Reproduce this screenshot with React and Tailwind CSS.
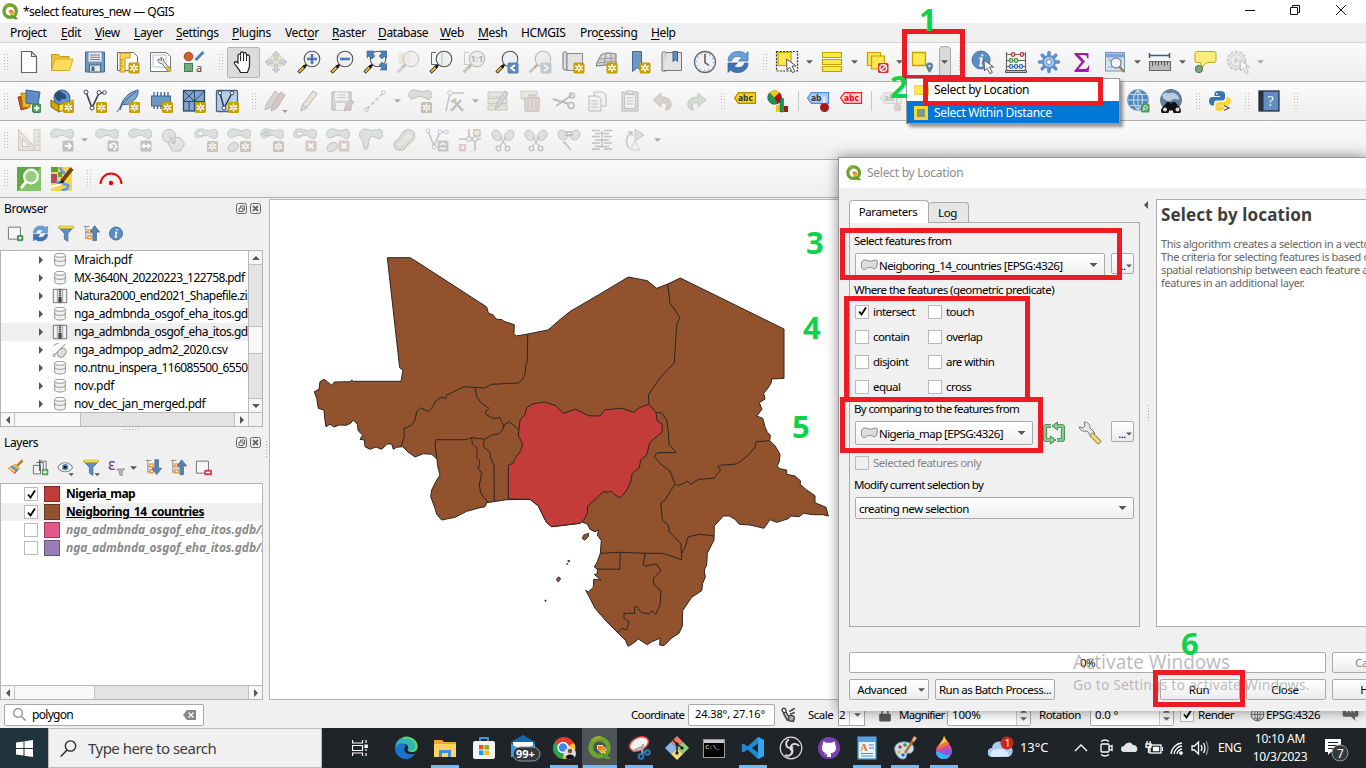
import React from "react";

/* ---------- small drawing helpers ---------- */
const Svg = ({ s = 24, children, className = "" }) => (
  <svg width={s} height={s} viewBox="0 0 24 24" fill="none" className={"shrink-0 " + className}>{children}</svg>
);
const Star = ({ x = 12.5, y = 12.5, fill = "#c4a000" }) => (
  <g transform={`translate(${x} ${y})`}>
    <rect x="0" y="0" width="11" height="11" rx="1.5" fill={fill} />
    <path d="M5.5 1.5v8M1.8 3.5l7.4 4M9.2 3.5l-7.4 4" stroke="#fff" strokeWidth="1.5" />
    <circle cx="5.5" cy="5.5" r="1.1" fill={fill} />
  </g>
);
const DimStar = (p) => <Star {...p} fill="#8d8560" />;
const Badge = ({ fill, d, x = 12.5, y = 12.5 }) => (
  <g transform={`translate(${x} ${y})`}>
    <rect width="11" height="11" rx="1.5" fill={fill} />
    <path d={d} stroke="#fff" strokeWidth="1.8" />
  </g>
);
const Down = ({ c = "#666", w = 7 }) => (
  <svg width={w} height="4" viewBox="0 0 8 4" className="shrink-0"><path d="M0 0h8L4 4z" fill={c} /></svg>
);
const Lens = ({ children, glass = "#eef0f0", handle = "#f0b92b" }) => (
  <Svg>
    <path d="M1.5 22.5L8 16" stroke="#222" strokeWidth="3.2" />
    <path d="M2 22L7 17" stroke={handle} strokeWidth="2" />
    <path d="M6.5 17.5l3-3" stroke="#111" strokeWidth="2.4" />
    <circle cx="15" cy="9" r="7.8" fill={glass} stroke="#555" strokeWidth="1.1" />
    {children}
  </Svg>
);
const DimLens = ({ children }) => (
  <Svg className="opacity-40">
    <path d="M1.5 22.5L8 16" stroke="#8d8873" strokeWidth="3" />
    <path d="M6.5 17.5l3-3" stroke="#555" strokeWidth="2.4" />
    <circle cx="15" cy="9" r="7.8" fill="#dfe1e1" stroke="#666" strokeWidth="1.1" />
    {children}
  </Svg>
);
const Blob = ({ extra, x = 0, y = 0 }) => (
  <g>
    <path transform={`translate(${x} ${y})`} d="M2 2.500C5-.5 10 1.500 13 2.500S19 0 22 2s2 8-1 8.500S15 6.500 11 7.500 4 11 2 9 .5 4.500 2 2.500z" fill="#b6beb9" stroke="#7b817d" strokeWidth="1" />
    {extra}
  </g>
);
const Scissors = () => (
  <g stroke="#777" strokeWidth="1.3"><path d="M9 9l6 9M15 9l-6 9" /><circle cx="7.500" cy="20.500" r="2.300" /><circle cx="16.500" cy="20.500" r="2.300" /></g>
);
const Tag = ({ fill, stroke, color, text }) => (
  <g>
    <path d="M1.500 9l4-5.300h17v10.600h-17z" fill={fill} stroke={stroke} strokeWidth="1.200" />
    <text x="5" y="12.200" fontSize="8.500" fontWeight="700" fill={color} fontFamily="Noto Sans, sans-serif">{text}</text>
  </g>
);
const Qgis = ({ s = 17 }) => (
  <Svg s={s}>
    <circle cx="11.500" cy="11.500" r="8.700" stroke="#6ba32f" strokeWidth="4.800" />
    <path d="M4 5a10 10 0 0 1 9-3.500" stroke="#93b023" strokeWidth="3" />
    <path d="M13 12.500l10 10.500h-5.500L11 16z" fill="#5c9630" />
    <path d="M9.500 9.500h5l3.500 4-4 3.500-4.500-4z" fill="#ee7913" stroke="#fff" strokeWidth=".8" />
    <path d="M13 13l4.500 4.500" stroke="#f5c32c" strokeWidth="1.800" />
  </Svg>
);
const Refresh = ({ s = 24 }) => (
  <Svg s={s}>
    <path d="M2 11C2 5 7 1 13 1.500c3 0 5 1 6.500 2.500L22 1.500V11h-9.500l3.300-3.200C12 5 6.500 6.500 5.500 11z" fill="#6b9fdb" stroke="#3a6ea8" strokeWidth=".7" />
    <path d="M22 13c0 6-5 10-11 9.500-3 0-5-1-6.500-2.500L2 22.500V13h9.500l-3.300 3.200c3.800 2.800 9.300 1.300 10.300-3.200z" fill="#3f73b3" stroke="#2d5c96" strokeWidth=".7" />
  </Svg>
);
const Info = ({ s = 24, children }) => (
  <Svg s={s}>
    <circle cx="10" cy="10" r="9" fill="#5b8cc4" stroke="#4675aa" />
    <path d="M8.500 8.500h2.200l-1.500 7h2.300M11.300 4.300v2" stroke="#fff" strokeWidth="1.900" />
    {children}
  </Svg>
);
const Arrow = ({ x = 13, y = 11 }) => (
  <path transform={`translate(${x} ${y})`} d="M0 0l9.500 7h-4l2.800 5.500-2.300 1.200-2.800-5.500L.500 11z" fill="#fff" stroke="#555" strokeWidth="1" />
);

/* ---------- toolbar icons ---------- */
const I = {
  newFile: <Svg><path d="M4.500 1.500h10l5 5v16h-15zM14.500 1.500v5h5" fill="#fff" stroke="#666" strokeWidth="1.200" /></Svg>,
  open: <Svg><path d="M1.500 20V4.500h7l1.500 2h9V9" fill="#e9c23a" stroke="#c39a17" /><path d="M1.500 20.500L5 9h18l-3.500 11.500z" fill="#ffdc5c" stroke="#d8ac22" /></Svg>,
  save: <Svg><path d="M2.500 2h19v20h-19z" fill="#6d97c4" stroke="#46688f" /><rect x="5.500" y="2.500" width="13" height="9" fill="#eee" /><path d="M7 5h10M7 7.300h10M7 9.500h10" stroke="#777" /><rect x="6.500" y="15" width="11" height="7" fill="#e8e8e8" stroke="#46688f" /><rect x="8.500" y="16.500" width="3" height="4.500" fill="#46688f" /></Svg>,
  layout: <Svg><path d="M1.500 2.500h16l4 4v14h-20z" fill="#fff" stroke="#666" /><path d="M4 3h10v5H9v14H4z" fill="#f5d35f" stroke="#c49b10" /><path d="M4 10h3M4 13h2M4 16h3M4 19h2" stroke="#a67f00" /><Star /></Svg>,
  layoutMgr: <Svg><path d="M1.500 2.500h16l4 4v15h-20z" fill="#fff" stroke="#777" /><path d="M4 5h13v12H4z" stroke="#a9c0e4" /><path d="M9 9a3.500 3.500 0 0 0 4 4.500l6 8 3-2.500-7-7c0-3-1-4.500-3.500-4.500l1.500 3z" fill="#e8e8e8" stroke="#777" /><path d="M17 16.500l5 5" stroke="#e2b83b" strokeWidth="3" /></Svg>,
  style: <Svg><circle cx="6.500" cy="6.500" r="4.300" fill="#d0602c" stroke="#a94413" /><path d="M13.500 10l8-8" stroke="#4f7fb5" strokeWidth="3" /><rect x="2.500" y="13.500" width="8" height="8" fill="#6fac80" stroke="#457e55" /><text x="14" y="21.500" fontSize="11" fill="#444" fontFamily="Noto Sans, sans-serif">a</text></Svg>,
  hand: <Svg><path d="M7 13V5.500c0-2 2.500-2 2.500 0V3.500c0-2.300 3-2.300 3 0V4c0-2 3-2 3 .5V6c.5-1.700 3-1.500 3 .7V15c0 4-1.500 5-2 7.500H9.500C8.500 19 5 16.500 3.500 13.500c-.7-2 1.500-2.500 2.500-1.300z" fill="#fff" stroke="#222" strokeWidth="1.200" /><path d="M9.500 5.500V11M12.500 4v7M15.500 5v6" stroke="#222" /></Svg>,
  pan: <Svg className="opacity-50"><rect x="7" y="6" width="10" height="10" fill="#e3dca4" stroke="#b8ac67" /><path d="M12 1l4 4h-2.500v5h-3V5H8zM12 23l4-4h-2.500v-5h-3v5H8zM1 12l4-4v2.500h4v3H5V16zM23 12l-4-4v2.500h-4v3h4V16z" fill="#a3b0bf" stroke="#8794a5" strokeWidth=".8" /></Svg>,
  zoomIn: <Lens><path d="M15 4v10M10 9h10" stroke="#4a7db8" strokeWidth="2.600" /></Lens>,
  zoomOut: <Lens><path d="M10 9h10" stroke="#4a7db8" strokeWidth="2.600" /></Lens>,
  zoomFull: <Lens><path d="M4 1h7L9 3l3 3-3 3-3-3-2 2zM24 1v7l-2-2-3 3-3-3 3-3-2-2zM24 20h-7l2-2-3-3 3-3 3 3 2-2z" fill="#4d7fb8" stroke="#33608f" strokeWidth=".6" /></Lens>,
  zoomSel: <Svg className="opacity-40"><path d="M3 2.500h11v12H3z" fill="#d9d4ab" /><path d="M1.500 22.500L8 16" stroke="#aaa68d" strokeWidth="3" /><path d="M6.500 17.500l3-3" stroke="#666" strokeWidth="2.400" /><circle cx="15" cy="9" r="7.800" fill="#dfe1e1" fillOpacity=".7" stroke="#777" /></Svg>,
  zoomLayer: <Lens handle="#e9b935"><path d="M7 2.500H2.500v12H9" stroke="#666" /><path d="M13 3v12" stroke="#bbb" /></Lens>,
  zoomNative: <DimLens><path d="M7 2.500H2.500v12H9" stroke="#888" /><text x="8.500" y="12.300" fontSize="9" fontWeight="700" fill="#444" fontFamily="Noto Sans, sans-serif">1:1</text></DimLens>,
  zoomLast: <Lens><Badge fill="#5b86b5" d="M7.500 2.500l-4 3 4 3" /></Lens>,
  zoomNext: <DimLens><Badge fill="#7b8a9a" d="M3.500 2.500l4 3-4 3" /></DimLens>,
  newMap: <Svg><path d="M2 3.500C2 1 6 1 6 3.500V20H4c-2 0-2-2-2-3z" fill="#ddd" stroke="#777" /><path d="M6 3.500h15.500v17H6z" fill="#e3e3e3" stroke="#888" /><Star /></Svg>,
  new3d: <Svg><path d="M7 5c5-3 10-2 15-1v10L2 16c1-4 3-7 5-11z" fill="#d6d6d6" stroke="#777" /><path d="M5 9l17-1M3.500 13l18-2M12 3l-2 13M17 3v12" stroke="#999" /><Star /></Svg>,
  newBm: <Svg><path d="M5.500 1.500h9v20l-4-4-5 4z" fill="#6d97c4" stroke="#46688f" /><Star /></Svg>,
  showBm: <Svg><path d="M2 3.500C2 1 6 1 6 3.500V21H2z" fill="#ddd" stroke="#777" /><path d="M6 2.500h15.500v18H4" fill="#e3e3e3" stroke="#777" /><path d="M13 1.500h4.500v10l-2.200-2-2.300 2z" fill="#5f8dc0" stroke="#3c5f88" /></Svg>,
  clock: <Svg><circle cx="12" cy="12" r="10.500" fill="#f1f1f1" stroke="#6c6c6c" strokeWidth="1.300" /><circle cx="12" cy="12" r="8.500" stroke="#7aa3d4" strokeDasharray="1 3.450" strokeWidth="1.400" /><path d="M12 4v8.500l4 3" stroke="#555" strokeWidth="1.500" /></Svg>,
  refresh: <Refresh />,
  select: <Svg><path d="M1.500 1.500h21v19.500h-21z" stroke="#333" strokeDasharray="2 1.300" strokeWidth="1.200" /><path d="M3 2.500h13v13H3z" fill="#fbe74e" stroke="#c4a000" strokeWidth="1.200" /><Arrow x={11.500} y={9} /></Svg>,
  selForm: <Svg><path d="M2.500 2.500h19v5h-19zM2.500 9.500h19v5h-19zM2.500 16.500h19v5h-19z" fill="#fbe74e" stroke="#c4a000" strokeWidth="1.200" /></Svg>,
  desel: <Svg><path d="M2.500 2.500h13v13h-13z" fill="#fbe74e" stroke="#c4a000" strokeWidth="1.200" /><path d="M6.500 6h13v13h-13z" fill="#fbe74e" stroke="#c4a000" strokeWidth="1.200" /><rect x="13" y="13" width="10.500" height="10" rx="1.500" fill="#d8333b" /><circle cx="18.200" cy="18" r="3.300" stroke="#fff" strokeWidth="1.300" /><path d="M16 20.300l4.500-4.500" stroke="#fff" strokeWidth="1.300" /></Svg>,
  selLoc: <Svg><path d="M2.500 2.500h13v13h-13z" fill="#fbe74e" stroke="#c4a000" strokeWidth="1.300" /><path d="M19.500 12.500a3.500 3.500 0 0 1 3.500 3.500c0 2.500-3.500 7-3.500 7S16 18.500 16 16a3.500 3.500 0 0 1 3.500-3.500z" fill="#5b7f9f" /><circle cx="19.500" cy="16" r="1.200" fill="#dfe8ef" /></Svg>,
  info: <Info><Arrow x={13} y={10} /></Info>,
  abacus: <Svg><path d="M2.500 2v20M21.500 2v20M2 4.500h20M2 10.500h20M2 16.500h20" stroke="#666" strokeWidth="1.200" /><path d="M1.500 20.500h21v2h-21z" fill="#bbb" stroke="#555" /><g strokeWidth="1.200"><circle cx="9" cy="4.500" r="1.800" fill="#f6d0d0" stroke="#c3322f" /><circle cx="18" cy="4.500" r="1.800" fill="#f6d0d0" stroke="#c3322f" /><circle cx="7" cy="10.500" r="1.800" fill="#c9e8c9" stroke="#3b923b" /><circle cx="12" cy="10.500" r="1.800" fill="#c9e8c9" stroke="#3b923b" /><circle cx="7" cy="16.500" r="1.800" fill="#cfe0f3" stroke="#3c6ea8" /><circle cx="12" cy="16.500" r="1.800" fill="#cfe0f3" stroke="#3c6ea8" /><circle cx="17" cy="16.500" r="1.800" fill="#cfe0f3" stroke="#3c6ea8" /></g></Svg>,
  gear: <Svg><path d="M12 2.500v19M2.500 12h19M5.200 5.200l13.600 13.600M18.800 5.200L5.200 18.800" stroke="#5d8fc9" strokeWidth="3.600" strokeLinecap="round" /><circle cx="12" cy="12" r="6" fill="#a9c8e8" stroke="#5d8fc9" strokeWidth="1.800" /><circle cx="12" cy="12" r="2.500" fill="#fff" stroke="#5d8fc9" /></Svg>,
  sigma: <Svg><path d="M4.500 3h14v5.500h-1.200C17 6 16 5 13.500 5H9l6 6.500L8.500 19H14c3 0 4-1.300 4.500-3.500h1L18.500 22H4.500v-1.500L11.500 12l-7-7.500z" fill="#a01ca6" /></Svg>,
  table: <Svg><rect x="2.500" y="2.500" width="19" height="18.500" fill="#d5e3f3" stroke="#7494b9" /><path d="M2.500 3.500h19v4h-19z" fill="#7ea5d1" /><path d="M5 10h14M5 17h14" stroke="#7ea5d1" /><circle cx="13" cy="13" r="5" fill="#eef4f8" stroke="#666" /><path d="M16.500 17l5 5" stroke="#a0803c" strokeWidth="2.200" /></Svg>,
  measure: <Svg><path d="M1.500 5.500h20M1.500 3v5M21.500 3v5" stroke="#3d5a7a" strokeWidth="1.500" /><rect x="1.500" y="11.500" width="21" height="9" fill="#bcbcbc" stroke="#666" /><path d="M4.500 12v4M7.500 12v3M10.500 12v4M13.500 12v3M16.500 12v4M19.500 12v3" stroke="#555" /></Svg>,
  tips: <Svg><path d="M4 1.500h17q2 0 2 2v7q0 2-2 2h-6q-5 1-6 6.500l-1.500-6.500H4q-2 0-2-2v-7q0-2 2-2z" fill="#fdec7c" stroke="#c2a31d" /><circle cx="6" cy="19" r="3.700" fill="#78a77c" stroke="#4b7b51" /></Svg>,
  action: <Svg className="opacity-35"><circle cx="10.500" cy="10.500" r="9" fill="#ccc" stroke="#888" strokeWidth="2" strokeDasharray="3 1.500" /><circle cx="10.500" cy="10.500" r="6" fill="#ddd" stroke="#888" /><path d="M8.500 7.500l5 3-5 3z" fill="#888" /><Arrow x={14} y={10} /></Svg>,

  dsm: <Svg><path d="M1 8l6-1 4 12-7 2z" fill="#c9581c" stroke="#984014" /><path d="M4 4l9 1v13l-7 1z" fill="#e6b51e" stroke="#a77e07" /><path d="M9 1l14 2-2 13-12-2z" fill="#5f8dc4" stroke="#3a6292" /><g transform="translate(15 14.500)"><rect x=".5" y=".5" width="8.500" height="8.500" rx="1.500" fill="#4b9b5b" stroke="#3d7f4a" /><path d="M4.750 2v5.500M2 4.750h5.500" stroke="#fff" strokeWidth="1.800" /></g></Svg>,
  gpkg: <Svg><circle cx="12" cy="9" r="8" fill="#5f94cf" stroke="#355f90" /><path d="M7 3c3-2 5 0 6 1s4 2 3 5-4-1-5 2-5 0-6-3 0-4 2-5z" fill="#2b4d78" /><path d="M1 11l8 5v7l-8-5z" fill="#d6a900" stroke="#7e6500" /><path d="M9 16l14-5v7L9 23z" fill="#fbe74e" stroke="#9c8200" /><Star x={13} y={13} /></Svg>,
  shp: <Svg><path d="M3 3l6 16L16 4h6" stroke="#445" strokeWidth="1.700" /><g fill="#fff" stroke="#445"><circle cx="3" cy="3" r="2" /><circle cx="9" cy="19" r="2" /><circle cx="16" cy="3.500" r="2" /><circle cx="21.500" cy="3.500" r="1.800" /></g><Star x={13} y={13} /></Svg>,
  feather: <Svg><path d="M4 21C5 11 12 3 22 1c1 5-3 11-9 14l-7 1z" fill="#7da5d0" stroke="#42668f" /><path d="M1 23C5 16 11 9 20 3" stroke="#42668f" /><Star x={13} y={13} /></Svg>,
  chip: <Svg><path d="M5 3v17M8.500 3v17M12 3v17M15.500 3v17M19 3v17" stroke="#41648c" strokeWidth="1.300" /><rect x="2.500" y="7" width="19" height="10" fill="#6d97c4" stroke="#41648c" /><Star x={13} y={13} /></Svg>,
  mesh: <Svg><rect x="1.500" y="1.500" width="21" height="20.500" fill="#7ea5d1" stroke="#2d4765" strokeWidth="1.300" /><path d="M12.500 1v21M1 12.500h22M12.500 1.500L1.500 12.500M1.500 1.500l11 11M22.500 2l-10 10M7 12v10" stroke="#2d4765" /><Star x={13} y={13} /></Svg>,
  vlayer: <Svg><rect x="1.500" y="1.500" width="21" height="21" rx="1" fill="#b5cfea" stroke="#41648c" strokeWidth="1.300" /><path d="M5 4l4 15 8-15" stroke="#334" strokeWidth="1.500" /><g fill="#fff" stroke="#445"><circle cx="5" cy="4" r="1.800" /><circle cx="9" cy="19" r="2" /><circle cx="17" cy="4" r="1.800" /></g><Star x={13} y={13} /></Svg>,
  pencils: <Svg className="opacity-40"><path d="M1 21l2-7L11 2l4 3L7 18z" fill="#aa9" stroke="#666" /><path d="M7 22l2-7 8-12 4 3-8 13z" fill="#b9837e" stroke="#666" /><path d="M18 21h6l-3 3z" fill="#222" /></Svg>,
  pencil: <Svg className="opacity-40"><path d="M4 22l1.500-6L16 2l4 3L9.500 19z" fill="#d4d1bd" stroke="#555" /><path d="M6 16l3.500 2.500" stroke="#555" /></Svg>,
  saveEdit: <Svg className="opacity-40"><path d="M2 3h19v18H2z" fill="#aaa" stroke="#555" /><rect x="5" y="3.500" width="13" height="8" fill="#eee" /><path d="M7 6h9M7 8.500h9" stroke="#888" /><rect x="6" y="14" width="9" height="7" fill="#eee" /><path d="M14 22l1-4 6-7 3 2-6 8z" fill="#b9837e" stroke="#777" /></Svg>,
  digitize: <Svg className="opacity-35"><path d="M4 20L20 4" stroke="#777" strokeWidth="1.600" strokeDasharray="4 2" /><circle cx="3.500" cy="20.500" r="2" stroke="#777" /><circle cx="20.500" cy="3.500" r="2" stroke="#777" /></Svg>,
  addPoly: <Svg className="opacity-45"><Blob /><DimStar x={13} y={13} /></Svg>,
  vertex: <Svg className="opacity-40"><path d="M5 22L9 4h14" stroke="#777" strokeWidth="1.300" /><circle cx="9" cy="4" r="2.300" fill="#fff" stroke="#777" /><path d="M10 22L20 11M13 12l9 10M10 13l5-3" stroke="#776" strokeWidth="2.600" /></Svg>,
  modAttr: <Svg className="opacity-40"><path d="M2 3h19v5H2zM2 9.500h19v5H2zM2 16h19v5H2z" fill="#cfceb4" stroke="#888" /><path d="M9 20l2-6 8-12 3 2-8 13z" fill="#aaa" stroke="#666" /></Svg>,
  trash: <Svg className="opacity-35"><path d="M2 2h16v8H2z" fill="#cfcfa8" stroke="#888" /><path d="M4 9h17M5.500 9l1 13h13l1-13M9 11v9M13 11v9M17 11v9M10 8V6h6v2" fill="#c6a5a5" stroke="#866" strokeWidth="1.300" /></Svg>,
  cut: <Svg className="opacity-35"><path d="M1 10l16 5M4 17L20 6" stroke="#555" strokeWidth="2" /><circle cx="20" cy="6.500" r="2.500" stroke="#555" strokeWidth="1.500" /><circle cx="19" cy="16.500" r="3" stroke="#555" strokeWidth="1.500" /></Svg>,
  copy: <Svg className="opacity-40"><path d="M9 3h9l3 3v11H9z" fill="#eee" stroke="#666" /><path d="M4 7h9l3 3v12H4z" fill="#eee" stroke="#666" /><path d="M6 12h7M6 15h7M6 18h7" stroke="#777" /></Svg>,
  paste: <Svg className="opacity-40"><path d="M4 3h16v19H4z" fill="#bbb" stroke="#666" /><path d="M6.500 5.500h11v14h-11z" fill="#eee" stroke="#777" /><path d="M9 2h6v3H9z" fill="#ddd" stroke="#666" /><path d="M8.500 9h7M8.500 12h7M8.500 15h7" stroke="#777" /></Svg>,
  undo: <Svg className="opacity-40"><path d="M2 11l8-7v4c8 0 11 4 10 9-1 3-3 4-6 4 4-4 1-8-4-7v4z" fill="#b39d91" stroke="#8a7a70" /></Svg>,
  redo: <Svg className="opacity-40"><path d="M22 11l-8-7v4C6 8 3 12 4 17c1 3 3 4 6 4-4-4-1-8 4-7v4z" fill="#a9b1a9" stroke="#7c857c" /></Svg>,
  label: <Svg><Tag fill="#f5d020" stroke="#a88c00" color="#333" text="abc" /></Svg>,
  diagram: <Svg><circle cx="8.500" cy="8.500" r="6.800" fill="#1a9850" stroke="#333" strokeWidth=".6" /><path d="M8.500 8.500L3.500 3.500a7 7 0 0 1 10 0z" fill="#f9c80e" /><path d="M8.500 8.500l5-5a7 7 0 0 1-2 11.300z" fill="#b50f0f" /><path d="M10 16h3.500v7H10z" fill="#f9c80e" /><path d="M14 9.500h3.500V23H14z" fill="#1a9850" stroke="#115" strokeWidth=".4" /><path d="M18 17h4v6h-4z" fill="#b50f0f" /></Svg>,
  pinLab: <Svg><Tag fill="#a9cdf6" stroke="#4a8be0" color="#333" text="ab" /><path d="M18 7.500l.5 8" stroke="#e4e4e4" strokeWidth="3" /><circle cx="18.500" cy="18.500" r="4.500" fill="#a3191c" /></Svg>,
  redLab: <Svg><Tag fill="#ffd3d3" stroke="#f02020" color="#e00" text="abc" /></Svg>,
  fadeLab: <Svg className="opacity-40"><Tag fill="#ddd" stroke="#aaa" color="#666" text="ab" /><circle cx="18.500" cy="18.500" r="4" fill="#b99" /><path d="M18 7v9" stroke="#999" strokeWidth="2" /></Svg>,
  globe: <Svg><circle cx="12" cy="11" r="10.500" fill="#4f86c0" stroke="#8fa4bb" /><path d="M2 11h20M4 5.500h16M4 16.500h16M12 1v20M12 1c-6 6-6 14 0 20M12 1c6 6 6 14 0 20" stroke="#c6daee" strokeWidth="1.100" /><rect x="15" y="15" width="8.500" height="8.500" rx="1" fill="#4b9b5b" /><circle cx="19.500" cy="18.500" r="1.800" stroke="#fff" /><path d="M18 20l-1.500 1.800" stroke="#fff" /></Svg>,
  globe2: <Svg><circle cx="12" cy="11" r="10.500" fill="#5d7f9f" stroke="#5c7894" /><path d="M3 6c4-4 7-1 9-2s7 1 8 5-4-1-7 2-9 0-10-5z" fill="#b9cbdc" /><path d="M8 13h3l1 2 1-2h3l5 6a4 4 0 1 1-7 2h-4a4 4 0 1 1-7-2z" fill="#111" /><circle cx="6" cy="20.500" r="2" fill="#ddd" /><circle cx="18.500" cy="20.500" r="2" fill="#ddd" /></Svg>,
  python: <Svg><path d="M11 2c-5 0-4.500 2-4.500 5H12v1H4c-4 0-4 8 0 8.500h2c0-5 1-5 4-5h4c2 0 3-1 3-3V5c0-2-2-3-6-3z" fill="#3776ab" /><circle cx="8.800" cy="4.800" r=".9" fill="#fff" /><path d="M12 22c-5 0-4.500-1.500-4.500-5 0-3 1-4 4-4h3c3 0 4-1 4-5h1.500c4 0 3.500 8 0 8.500H12v1h4c1 2-1 4.500-4 4.500z" fill="#ffd43b" /><path d="M16 16.500l5 2.500-5 2.500" stroke="#555" strokeWidth="1.300" /></Svg>,
  help: <Svg><rect x="2" y="2" width="20" height="20" fill="#5f8dc4" stroke="#223" strokeWidth="1.200" /><path d="M2 2h4.500v20H2z" fill="#233140" /><text x="10.500" y="17" fontSize="14" fill="#fff" fontFamily="Liberation Serif, serif">?</text></Svg>,

  cad: <Svg className="opacity-35"><path d="M1.500 1v21.500h19zM5.500 11v7.500H13z" fill="#cdbfb3" fillRule="evenodd" stroke="#887c70" /><path d="M17 1.500h6v21h-6z" fill="#d6cdb8" stroke="#887" /><path d="M20 5h3M19 9h4M20 13h3M19 17h4" stroke="#887" /></Svg>,
  move: <Svg className="opacity-40"><Blob extra={<Badge fill="#777" d="M2 5.500h6M5.500 2.500l3 3-3 3" />} /></Svg>,
  rotate: <Svg className="opacity-40"><Blob extra={<Badge fill="#777" d="M3 7a3 3 0 1 1 3 2M2 4l1 3 3-1" />} /></Svg>,
  scale: <Svg className="opacity-40"><Blob extra={<Badge fill="#777" d="M2 5.500h7M4 3L1.800 5.500 4 8M7 3l2.200 2.500L7 8" />} /></Svg>,
  simplify: <Svg className="opacity-40"><circle cx="8" cy="8" r="6.800" fill="#bcc4bf" stroke="#777" /><path d="M11.500 9.500h8l4 6.500-4 7h-8L7.500 16z" fill="#c9cfcb" stroke="#777" /><path d="M8 8l6 7M10.500 15H14v-4" stroke="#666" /></Svg>,
  addRing: <Svg className="opacity-40"><Blob extra={<><ellipse cx="6.500" cy="5.500" rx="3.200" ry="2" fill="#fff" stroke="#777" /><DimStar x={13} y={13} /></>} /></Svg>,
  addPart: <Svg className="opacity-40"><Blob extra={<><path d="M1 21c0-5 6-8 9-6s1 7-3 8-6 0-6-2z" fill="#bcc3be" stroke="#777" /><DimStar x={13} y={13} /></>} /></Svg>,
  fillRing: <Svg className="opacity-40"><Blob extra={<><ellipse cx="6.500" cy="5.500" rx="3.200" ry="2" fill="#aaa" stroke="#777" /><DimStar x={13} y={13} /></>} /></Svg>,
  delRing: <Svg className="opacity-40"><Blob extra={<><ellipse cx="6.500" cy="5.500" rx="3.200" ry="2" fill="#fff" stroke="#777" /><Badge fill="#b08a90" d="M3 3l5 5M8 3l-5 5" /></>} /></Svg>,
  delPart: <Svg className="opacity-40"><Blob extra={<><path d="M1 21c0-5 6-8 9-6s1 7-3 8-6 0-6-2z" fill="#bcc3be" stroke="#777" /><Badge fill="#b08a90" d="M3 3l5 5M8 3l-5 5" /></>} /></Svg>,
  reshape: <Svg className="opacity-40"><path d="M2 3C5-.5 10 2 13 2.500S19 0 22 2s2 8-1 8.500S14 7 11 9c-2 3-1 12-4 12.500S5 14 2 10.500 .5 5 2 3z" fill="#b6beb9" stroke="#777" /></Svg>,
  offset: <Svg className="opacity-40"><path d="M2 17c0-5 4-4 6-8s5-8 10-7 6 6 3 10-5 3-7 7-11 5-12-2z" fill="#c6cbb5" stroke="#777" strokeWidth="1.200" /><path d="M5 17c0-3 4-3 6-7s4-6 7-5 3 4 1 6-5 3-7 6-7 4-7 0z" fill="#cfd3cb" stroke="#999" /></Svg>,
  rotPt: <Svg className="opacity-35"><path d="M3 3l6 15L15 4h7" stroke="#667" strokeWidth="1.500" /><g fill="#fff" stroke="#667"><circle cx="3" cy="3" r="2" /><circle cx="9" cy="19" r="2" /><circle cx="15" cy="4" r="2" /><circle cx="21.500" cy="4" r="1.800" /></g><Badge fill="#777" d="M3 4.500a3 3 0 0 1 5 0M8 7a3 3 0 0 1-5 0" /></Svg>,
  trim: <Svg className="opacity-40"><path d="M1 11h22M11 1v10M17 11v12" stroke="#777" strokeWidth="1.600" /><path d="M9 9h4v4H9zM15 9h4v4h-4z" fill="#fff" stroke="#777" /><g transform="translate(15 1) scale(.7)"><DimStar x={0} y={0} /></g><g transform="translate(1 16) scale(.65)"><Badge fill="#b08a90" x={0} y={0} d="M3 3l5 5M8 3l-5 5" /></g></Svg>,
  split: <Svg className="opacity-40"><path d="M11 10C10 1 1 0 1 6s7 9 10 4zM13 10c1-9 10-10 10-4s-7 9-10 4z" fill="#bcc4bf" stroke="#777" /><Scissors /></Svg>,
  merge: <Svg className="opacity-40"><path d="M11 9C10 1 1 0 1 6s7 8 10 3zM13 9c1-8 10-9 10-3s-7 8-10 3z" fill="#bcc4bf" stroke="#777" /><path d="M8 4h8M8 7h8M6 14c4 1 5 6 8 8" stroke="#666" strokeWidth="1.400" /></Svg>,
  attrs: <Svg className="opacity-40"><path d="M2 2.500h8M14 2.500h8M2 8.500h8M14 8.500h8M2 15h8M14 15h8M2 21h8M14 21h8M5 5.500h14M5 12h14M5 18.500h14M12 3v17" stroke="#777" strokeWidth="1.300" /></Svg>,
  symRot: <Svg className="opacity-35"><path d="M6 20A10 10 0 0 1 8 5M5 4h4v4" stroke="#667" strokeWidth="1.500" /><path d="M12 1l9 6-9 6z" fill="#a9b5ad" stroke="#778" /><path d="M12 13l5 9H7z" fill="#eee" stroke="#999" /></Svg>,

  osmFind: <Svg><rect width="24" height="24" fill="#5fa845" /><path d="M0 24L24 0v24z" fill="#84c565" /><circle cx="14" cy="9.500" r="6.800" stroke="#fff" strokeWidth="2.200" fill="#97cf80" /><path d="M9 15l-5 6" stroke="#fff" strokeWidth="3" /></Svg>,
  osmEdit: <Svg><rect x="1" y="0" width="21" height="24" fill="#f9d649" /><path d="M1 0h7v5H1z" fill="#58a046" /><path d="M1 7h6v9H1z" fill="#b04a5e" /><path d="M8 5h4v5H8z" fill="#58a046" /><path d="M9 0c4 3 2 6 6 6M6 15c3 2 5-2 7 1s6 0 5 4-4 1-6 4" stroke="#5a9cf0" strokeWidth="2.800" /><path d="M1 20l10-3" stroke="#fff" strokeWidth="2" /><path d="M12 14L22 1.500" stroke="#7c3f10" strokeWidth="4" /><path d="M8 17l4-4 2.500 2z" fill="#111" /></Svg>,
  arc: <Svg><path d="M1.500 17a10.500 10.500 0 0 1 21 0" stroke="#f40000" strokeWidth="1.900" /><circle cx="12" cy="16" r="2.200" fill="#f40000" /></Svg>,
};

/* ---------- toolbar layout ---------- */
const Handle = ({ first }) => (
  <div className={"flex shrink-0 justify-center gap-[2px] " + (first ? "w-[12.5px]" : "w-4 pl-[5px]")}>
    <div className="h-[17px] w-px bg-[repeating-linear-gradient(#bbb_0_1px,transparent_1px_3px)]" />
    <div className="h-[17px] w-px bg-[repeating-linear-gradient(#bbb_0_1px,transparent_1px_3px)]" />
  </div>
);
const Bar = ({ items, h = "h-[39px]" }) => (
  <div className={"flex shrink-0 items-center border-b border-[#b0b0b0] bg-gradient-to-b from-[#fafafa] to-[#eeeeee] overflow-hidden " + h}>
    <Handle first />
    {items.map((it, i) => {
      if (it === "|") return <Handle key={i} />;
      if (it === "/") return <div key={i} className="flex w-[7px] shrink-0 justify-center"><div className="h-5 w-px bg-[#c8c8c8]" /></div>;
      if (it === "v" || it === "w") return <div key={i} className="flex w-3 shrink-0 items-center justify-center"><Down c={it === "v" ? "#5c5c5c" : "#aaa"} /></div>;
      if (it === "gap") return <div key={i} className="w-[214px] shrink-0" />;
      if (it === "V") return <div key={i} className="flex h-8 w-3 shrink-0 items-center justify-center rounded-t border border-[#aaa] bg-[#dadada]"><Down c="#555" /></div>;
      return (
        <div key={i} className={"flex shrink-0 items-center justify-center w-[33px] " + (it === "hand" ? "h-[31px] rounded-[2px] border border-[#b4b4b4] bg-[#dcdcdc]" : "")}>
          {I[it]}
        </div>
      );
    })}
  </div>
);
const ROW1 = "newFile open save layout layoutMgr style | hand pan zoomIn zoomOut zoomFull zoomSel zoomLayer zoomNative zoomLast zoomNext newMap new3d newBm showBm clock refresh | select v selForm v desel v selLoc V | info abacus gear sigma table v measure v tips action w".split(" ");
const ROW2 = "dsm gpkg shp feather chip mesh vlayer | pencils pencil saveEdit digitize w addPoly vertex w modAttr trash cut copy paste undo redo | label diagram / pinLab redLab / fadeLab gap globe globe2 | python | help |".split(" ");
const ROW3 = "cad move w rotate scale simplify addRing addPart fillRing delRing delPart reshape offset rotPt trim split split merge attrs symRot w".split(" ");
const ROW4 = "osmFind osmEdit | arc".split(" ");

const MENU = [
  ["w-[51px]", "Pro", "j", "ect"], ["w-[34px]", "", "E", "dit"], ["w-[39px]", "", "V", "iew"], ["w-[42px]", "", "L", "ayer"],
  ["w-[56px]", "", "S", "ettings"], ["w-[53px]", "", "P", "lugins"], ["w-[47px]", "Vect", "o", "r"], ["w-[46px]", "", "R", "aster"],
  ["w-[62px]", "", "D", "atabase"], ["w-[38px]", "", "W", "eb"], ["w-[43px]", "", "M", "esh"], ["w-[59px]", "HCMGIS", "", ""],
  ["w-[71px]", "Pro", "c", "essing"], ["w-[40px]", "", "H", "elp"],
];

/* ---------- panels ---------- */
const PanelHead = ({ title }) => (
  <div className="flex h-[22px] shrink-0 items-center pl-1 pr-[1px] text-[12px] tracking-[-0.4px]">
    <span className="flex-1">{title}</span>
    <svg width="26" height="12" viewBox="0 0 26 12" fill="none" stroke="#666">
      <rect x=".5" y=".5" width="10" height="10" rx="2" /><path d="M4.500 4.500V3h4v4H7M3 5h4v3.500H3z" />
      <rect x="14.500" y=".5" width="10" height="10" rx="2" /><path d="M17 3l5 5M22 3l-5 5" strokeWidth="1.800" />
    </svg>
  </div>
);
const TreeUp = ({ down }) => (
  <Svg s={17}><path d="M1 2h8M4 2v18M4 10h3M4 18h3" stroke="#888" strokeWidth="1.300" /><rect x="7" y="7" width="4.500" height="4.500" fill="#fff" stroke="#f28a1a" strokeWidth="1.700" /><rect x="7" y="15" width="4.500" height="4.500" fill="#fff" stroke="#f28a1a" strokeWidth="1.700" />
    <path d={down ? "M14 1h5v12h4.500L16.500 22 10 13h4z" : "M14 22h5V10h4.500L16.500 1 10 10h4z"} fill="#5684b8" stroke="#3a5f8a" /></Svg>
);
const Funnel = ({ tri }) => (
  <Svg s={17}><path d="M1 3h21l-8 9v11l-5-3v-8z" fill="#5d8dc2" stroke="#41648c" /><path d="M1 1.500h21v3.500H1z" fill="#f6e04b" stroke="#b59c16" strokeWidth=".7" />{tri && <path d="M16 20h8l-4 4z" fill="#555" />}</Svg>
);
const AddLayer = ({ minus }) => (
  <Svg s={17}><path d="M2 3h17v17H2z" fill="#f6f6f6" stroke="#777" strokeWidth="1.400" />{minus ? <><rect x="13" y="15" width="11" height="8" rx="2" fill="#e63b45" /><path d="M15.500 19h6" stroke="#fff" strokeWidth="2" /></> : <><rect x="14" y="14" width="9" height="9" rx="2" fill="#4b9b5b" /><rect x="17" y="17" width="3" height="3" fill="#fff" /></>}</Svg>
);
const Db = () => (
  <Svg s={16}><path d="M4 5v13c0 4 16 4 16 0V5" fill="#f2f2f2" stroke="#888" strokeWidth="1.300" /><ellipse cx="12" cy="5" rx="8" ry="3" fill="#fff" stroke="#888" strokeWidth="1.300" /><path d="M4 11c0 4 16 4 16 0" stroke="#888" strokeWidth="1.300" /></Svg>
);
const Zip = () => (
  <Svg s={16}><path d="M2 2h20v20H2z" fill="#f4f4f4" stroke="#777" strokeWidth="1.500" /><path d="M8 2h8v20H8z" fill="#fff" stroke="#777" /><path d="M12 2v13" stroke="#333" strokeWidth="4" strokeDasharray="1.800 1.200" /><rect x="9.500" y="14" width="5" height="8" fill="#444" /></Svg>
);
const Csv = () => (
  <Svg s={16}><path d="M3 20L20 3M3 6c2-4 5-3 7-4" stroke="#777" strokeWidth="1.300" /><circle cx="3" cy="20" r="2" stroke="#777" /><path d="M9 21c-3-5 0-9 5-11s8 1 7 6-8 10-12 5z" fill="#ddd" stroke="#777" strokeWidth="1.300" /></Svg>
);
const Tri = ({ dir = "r", c = "#555" }) => (
  <svg width="8" height="8" viewBox="0 0 8 8" className="shrink-0"><path d={{ r: "M2 0l4 4-4 4z", l: "M6 0L2 4l4 4z", u: "M0 6l4-4 4 4z", d: "M0 2l4 4 4-4z" }[dir]} fill={c} /></svg>
);
const TREE = [
  [Db, "Mraich.pdf", "tracking-[-0.3px]"], [Db, "MX-3640N_20220223_122758.pdf", "tracking-[-0.6px]"], [Zip, "Natura2000_end2021_Shapefile.zip", "tracking-[-0.55px]"],
  [Db, "nga_admbnda_osgof_eha_itos.gdb", "tracking-[-0.5px]"], [Zip, "nga_admbnda_osgof_eha_itos.gdb.zip", "tracking-[-0.5px]"], [Csv, "nga_admpop_adm2_2020.csv", "tracking-[-0.5px]"],
  [Db, "no.ntnu_inspera_116085500_65501", "tracking-[-0.6px]"], [Db, "nov.pdf", "tracking-[-0.3px]"], [Db, "nov_dec_jan_merged.pdf", "tracking-[-0.4px]"],
];
const HScroll = ({ thumb, corner }) => (
  <div className="flex h-[14px] shrink-0 border-t border-[#b8b8b8] bg-[#e3e3e3]">
    <div className="flex w-[14px] items-center justify-center border-r border-[#c0c0c0] bg-[#f6f6f6]"><Tri dir="l" /></div>
    <div className={"border-r border-[#c0c0c0] bg-[#f8f8f8] " + thumb} />
    <div className="flex-1" />
    <div className="flex w-[14px] items-center justify-center border-l border-[#c0c0c0] bg-[#f6f6f6]"><Tri /></div>
    {corner && <div className="w-[14px] border-l border-[#c0c0c0] bg-[#f0f0f0]" />}
  </div>
);
const Check = ({ on, dim }) => (
  <div className={"flex h-[14px] w-[14px] shrink-0 items-center justify-center border border-[#b9b9b9] " + (dim ? "bg-[#f0f0f0]" : "bg-white")}>
    {on && <svg width="9" height="9" viewBox="0 0 9 9" fill="none"><path d="M1 4.500l2.500 3L8 .5" stroke="#000" strokeWidth="1.800" /></svg>}
  </div>
);
const Layer = ({ on, color, name, cls, row = "" }) => (
  <div className={"flex h-[18px] items-center whitespace-nowrap pl-[23px] " + row}>
    <Check on={on} />
    <div className={"ml-[6px] h-4 w-4 shrink-0 border border-[#0005] " + color} />
    <span className={"ml-[6px] leading-[18px] " + cls}>{name}</span>
  </div>
);

const tile = (ox, oy) => (s) => s.trim().split(/\s+/).map((p) => { const [x, y] = p.split(",").map(Number); return `${(ox + x / 3).toFixed(1)},${(oy + y / 3).toFixed(1)}`; }).join(" ");
const A = tile(300, 245), B = tile(570, 245), C = tile(480, 470);
const OUTLINE = [
  A("262,38 330,38 347,48 560,186 565,204 580,210 588,222 606,224 612,229 643,239 642,266 649,273 683,267 744,255 775,228 809,200"),
  B("90,147 175,96 232,107 260,130 293,117 331,99 642,252 642,400 605,402 603,415 592,432 581,445 585,462 568,473 576,493 560,513 578,520 585,545 592,562 601,570 599,587 615,602 630,628 628,650 622,662 628,671 650,675 650,688 675,693 692,708 690,718 710,735 735,752"),
  C("1005,98 1038,112 1045,138 1028,134 1000,134 970,130 958,140 932,138 925,146 890,157 870,149 852,175 810,165 778,163 765,148 748,138 730,138 703,168 702,210 682,250 680,285 673,300 676,322 668,340 665,362 635,382 608,422 607,468 597,490 575,504 552,527 539,525 540,505 515,515 502,524 475,507 460,520 444,529 437,512 415,490 380,455 345,415 330,385 317,361 325,366 340,352 341,328 363,330 350,320 343,313 352,312 352,297 343,291 352,275 361,250 364,212 352,195 356,180 345,185 330,178 322,162 303,155 300,160 215,170 200,158 188,135 175,108 150,88 80,89 20,98 15,110 0,113"),
  A("500,799 465,817 425,825 410,808 405,790 392,755 395,735 407,710 420,690 413,665 411,642 395,628 370,626 345,636 325,622 308,605 290,607 280,613 275,597 262,597 245,613 228,606 210,613 195,605 193,585 180,583 188,570 175,558 172,538 160,525 152,535 138,541 118,540 102,546 90,538 78,545 74,520 72,495 55,490 50,460 43,440 57,433 60,410 72,403 95,421 103,411 150,410 155,405 160,409 303,409 309,376 299,368"),
].join(" ");
const NIGERIA = [
  A("625,762 625,660 640,655 645,640 660,620 668,600 655,570 660,525 675,508 680,488 697,477 732,471 768,482 790,505 827,493 865,512 900,513"),
  B("105,494 155,490 192,502 210,487 237,478 258,503 262,528 277,537 276,563 262,573 240,592 230,630 212,645 208,668 187,685 182,710 170,735 152,758 135,750 122,737 115,742 100,740 55,782"),
  C("323,107 322,130 310,152 300,160 215,170 200,158 188,135 175,108 150,88"),
].join(" ");
const BORDERS = [
  A("683,267 682,350 677,360 676,385 668,403 655,414 575,418 553,429 492,425 440,450 438,460 422,457 405,470 400,483 385,500 362,488 350,500 345,525 335,540 312,551 313,575 303,605"),
  A("526,429 530,455 545,475 567,490 556,500 560,510 580,520 600,518 605,530 612,545"),
  A("655,553 628,530 612,540 608,555 595,567 575,570 555,583 515,578 495,584 408,584 405,600 411,642"),
  A("553,585 550,605 570,622 572,640 582,660 583,768"),
  A("515,578 517,597 532,610 530,640 540,648 535,670 545,685 538,720 542,745 565,773"),
  B("293,117 300,175 315,195 330,219 320,238 313,353 270,398 235,450 237,478"),
  B("258,503 275,503 290,525 295,560 297,598 318,623 262,623 253,635 275,660 300,678 315,718 300,740 285,765") + " " + C("542,100 547,150 565,165 568,185 603,222 605,270 585,262 545,250 495,250 421,247 361,250"),
  B("315,718 325,722 353,708 362,718 385,703 432,700 452,675 443,665 450,661 500,657 530,635 555,608 558,590 599,587"),
  C("605,250 615,232 625,200 660,193 702,198"),
  C("421,247 419,298 352,297"),
  C("495,250 490,285 495,288 530,282 542,302 520,325 522,345 543,362 540,405 527,433 515,422 508,432 485,428 470,410 463,412 465,430 432,430 432,445 447,455 440,480 425,475 412,490"),
];
const ISLANDS = [C("306,205 312,194 326,190 325,200 314,211"), C("229,327 237,320 242,327 234,336"), C("263,272 269,271 267,277"), C("194,391 198,390 197,395"), C("260,281 263,280 262,284")];
const MapView = () => (
  <svg width="568" height="499" viewBox="270 200 568 499" strokeWidth="1" strokeLinejoin="round" stroke="#2b2622">
    <polygon points={OUTLINE} fill="#91522d" />
    {BORDERS.map((b, i) => <polyline key={i} points={b} fill="none" />)}
    {ISLANDS.map((b, i) => <polygon key={i} points={b} fill="#91522d" strokeWidth=".8" />)}
    <polygon points={NIGERIA} fill="#c43c39" />
  </svg>
);

/* ---------- dialog ---------- */
const Poly = () => (
  <svg width="17" height="12" viewBox="0 0 17 12" className="shrink-0"><path d="M1 2.500C3 0 5 1 8 2s6-2 8-.500c1 2 0 7-1.500 8S10 7.500 7.500 8.500 3 12 1.500 10 0 4 1 2.500z" fill="#ddd" stroke="#888" /></svg>
);
const Combo = ({ icon, children, className }) => (
  <div className={"flex items-center rounded-[2px] border border-[#a9a9a9] bg-gradient-to-b from-white to-[#efefef] " + className}>
    {icon && <Poly />}
    <span className="ml-[1px] flex-1 whitespace-nowrap pt-px">{children}</span>
    <Down w={9} c="#555" />
  </div>
);
const Btn = ({ children, className }) => (
  <div className={"flex h-[21px] shrink-0 items-center justify-center whitespace-nowrap rounded-[2px] border border-[#aaa] bg-gradient-to-b from-white to-[#ececec] " + className}>{children}</div>
);
const Dots = () => (
  <Btn className="w-[23px] gap-0 self-start pl-[5px] pt-1">...<Down w={6} c="#555" /></Btn>
);
const PREDS = [["intersect", "touch"], ["contain", "overlap"], ["disjoint", "are within"], ["equal", "cross"]];
const Dialog = () => (
  <div className="absolute left-[838px] top-[157px] flex h-[554px] w-[528px] flex-col border-l border-t border-[#999] bg-[#f0f0f0] text-[11.5px] tracking-[-0.56px] shadow-[0_0_12px_rgba(0,0,0,0.45)]">
    <div className="flex h-[30px] shrink-0 items-center bg-white pl-[7px] text-[12px] tracking-[-0.25px] text-[#8d8d8d]">
      <Qgis s={16} /><span className="ml-[5px]">Select by Location</span>
    </div>
    <div className="flex h-[440px] shrink-0">
      <div className="ml-[10px] mt-[12px] w-[291px] shrink-0">
        <div className="flex h-[22px] items-end tracking-[-0.4px]">
          <div className="flex h-[23px] w-[80px] -mb-px items-center justify-center rounded-t border border-b-0 border-[#aaa] bg-white relative pr-[2px]">Parameters</div>
          <div className="flex h-[20px] w-[40px] items-center justify-center rounded-t border border-b-0 border-l-0 border-[#aaa] bg-[#e6e6e6] pr-[2px]">Log</div>
        </div>
        <div className="h-[405px] border border-[#aaa] pl-[4px]">
          <div className="mt-[9px] h-[18px] leading-[18px]">Select features from</div>
          <div className="mt-[3px] flex gap-[6px] pl-px">
            <Combo icon className="h-6 w-[250px] pl-[5px] pr-[6px]">Neigboring_14_countries [EPSG:4326]</Combo><Dots />
          </div>
          <div className="mt-1 h-[18px] leading-[18px]">Where the features (geometric predicate)</div>
          <div className="flex flex-col pl-px">
            {PREDS.map(([a, b], i) => (
              <div key={a} className="flex h-[25px] items-center">
                <Check on={i === 0} /><span className="ml-1 w-[55px]">{a}</span><Check /><span className="ml-1">{b}</span>
              </div>
            ))}
          </div>
          <div className="mt-px h-[18px] leading-[18px] tracking-[-0.65px]">By comparing to the features from</div>
          <div className="mt-[3px] flex pl-px">
            <Combo icon className="h-6 w-[178px] pl-[5px] pr-[6px]">Nigeria_map [EPSG:4326]</Combo>
            <Svg className="ml-[9px]"><path d="M9 5H4.500Q3 5 3 6.500v11Q3 19 4.500 19H9M15 19h4.500q1.500 0 1.500-1.500v-11Q21 5 19.500 5H15" stroke="#3f8f50" strokeWidth="4.200" /><path d="M15.500 1v8L10 5zM8.500 15v8l5.500-4z" fill="#8cc494" stroke="#3f8f50" /><path d="M9 5H4.500Q3 5 3 6.500v11Q3 19 4.500 19H9M15 19h4.500q1.500 0 1.500-1.500v-11Q21 5 19.500 5H14" stroke="#8cc494" strokeWidth="2.400" /></Svg>
            <Svg className="ml-3"><path d="M1 6l4 1 2-2-1-4c4 0 6 2 6 6l5 5-4 3-4-5c-4 1-7-1-8-4z" fill="#e8e8e8" stroke="#777" /><path d="M13 13l9 9" stroke="#8a7530" strokeWidth="5" /><path d="M13.500 13.500l8 8" stroke="#ecd57c" strokeWidth="3.300" /></Svg>
            <div className="ml-[9px]"><Dots /></div>
          </div>
          <div className="mt-[9px] flex h-[18px] items-center pl-px text-[#868686] tracking-[-0.5px]"><Check dim /><span className="ml-1">Selected features only</span></div>
          <div className="mt-1 h-[18px] leading-[18px] tracking-[-0.65px]">Modify current selection by</div>
          <div className="mt-[3px] pl-px"><Combo className="h-[22px] w-[279px] pl-[2px] pr-[6px] tracking-[-0.5px]">creating new selection</Combo></div>
        </div>
      </div>
      <div className="flex w-[16px] shrink-0 flex-col items-center pt-[13px]">
        <div className="-ml-1"><Tri dir="l" /></div>
        <div className="mt-[196px] h-[17px] w-px bg-[repeating-linear-gradient(#aaa_0_1px,transparent_1px_3px)]" />
      </div>
      <div className="mt-[11px] h-[428px] flex-1 overflow-hidden border border-r-0 border-[#aaa] bg-white pl-1 text-[#666]">
        <div className="mt-[4px] whitespace-nowrap text-[17px] font-bold leading-[22px] tracking-[0.15px] text-[#3d3d3d]">Select by location</div>
        <div className="mt-[11px] whitespace-nowrap text-[11px] leading-[13px] tracking-[-0.36px]">
          This algorithm creates a selection in a vector<br />The criteria for selecting features is based on<br />spatial relationship between each feature and<br />features in an additional layer.
        </div>
      </div>
    </div>
    <div className="ml-[10px] mt-[24px] flex shrink-0 gap-[6px] overflow-hidden">
      <div className="flex h-[21px] w-[477px] shrink-0 items-center justify-center rounded-[2px] border border-[#aaa] bg-white">0%</div>
      <Btn className="w-[80px] tracking-[-0.3px] text-[#888]">Cancel</Btn>
    </div>
    <div className="ml-[10px] mt-[6px] flex shrink-0 gap-[6px] overflow-hidden tracking-[-0.35px]">
      <Btn className="w-[80px] gap-[11px] pl-1 tracking-[-0.45px]">Advanced<Down c="#555" /></Btn>
      <Btn className="w-[120px] tracking-[-0.5px]">Run as Batch Process...</Btn>
      <div className="w-[93px] shrink-0" />
      <Btn className="w-[80px] pr-[2px]">Run</Btn>
      <Btn className="w-[80px] pr-[2px]">Close</Btn>
      <Btn className="w-[80px]">Help</Btn>
    </div>
  </div>
);

/* ---------- taskbar ---------- */
const App24 = ({ w, on, active, children }) => (
  <div className={"flex h-10 shrink-0 flex-col items-center " + w + (active ? " bg-[#4d5356]" : "")}>
    <div className="flex h-[37px] items-center pt-[3px]">{children}</div>
    {on && <div className={"h-[3px] bg-[#76b9ed] " + (active ? "w-[34px]" : "w-[28px]")} />}
  </div>
);
const Taskbar = () => (
  <div className="flex h-10 shrink-0 bg-[#1e2427] text-white">
    <div className="flex w-12 shrink-0 items-center justify-center bg-[#21353e]">
      <svg width="17" height="17" viewBox="0 0 17 17" fill="#fff"><path d="M0 2.500l7.500-1V8H0zM8.500 1.300L17 0v8H8.500zM0 9h7.500v6.500L0 14.500zM8.500 9H17v8l-8.500-1.300z" /></svg>
    </div>
    <div className="flex w-[274px] shrink-0 items-center border border-[#bbb] bg-[#f0f0f0] pl-[11px] text-[15px] tracking-[-0.52px] text-[#3c3c3c]">
      <svg width="17" height="17" viewBox="0 0 17 17" fill="none" stroke="#222" strokeWidth="1.300"><circle cx="10.500" cy="6" r="5.200" /><path d="M7 10L.8 16.500" /></svg>
      <span className="ml-[11px]">Type here to search</span>
    </div>
    <App24 w="w-[76px]"><svg width="16" height="16" viewBox="0 0 16 16" fill="none" stroke="#fff" strokeWidth="1.200"><path d="M.5 0v3h10V0M.5 16v-3h10v3M.5 5.500h10v5H.5zM14 0v3M14 13v3M14 9v2" /><path d="M13 5h2.200v2.500H13z" fill="#fff" /></svg></App24>
    <App24 w="w-[32px] -ml-2"><Svg><path d="M1.500 14C0 6 6 .5 13 1s10.500 6 10.500 10c0 3-3 5-6 5s-4.500-1-3.500-3c1-3-1-5.500-4.500-5-4 .5-7 3-8 6z" fill="#2fb5b5" /><path d="M9 2.500C15 0 22.500 4 22.500 10.500c0 3-2 4.500-5 4.500" stroke="#5fd668" strokeWidth="2.200" /><path d="M1.300 12.500C2 8.500 7 6.500 10.500 8c2 1 .5 2.500 0 4.500-1 4 4 7.500 10.500 5-3 5-8 6.500-12.500 5S1 17 1.300 12.500z" fill="#1a74cf" /></Svg></App24>
    <App24 w="w-[45px]" on><Svg><path d="M1 4h8l2 2h12v15H1z" fill="#e9a82b" /><path d="M1 8h22v13H1z" fill="#fcd462" /><path d="M6 21v-7h12v7h-3v-4H9v4z" fill="#3b8fdb" /></Svg></App24>
    <App24 w="w-[33px]"><Svg><path d="M8 6V2h8v4" stroke="#3a9ae0" strokeWidth="1.800" /><rect x="1" y="5" width="22" height="18" rx="2" fill="#f4f4f4" /><path d="M7 9h4.500v4.500H7z" fill="#f25022" /><path d="M12.500 9H17v4.500h-4.500z" fill="#7fba00" /><path d="M7 14.500h4.500V19H7z" fill="#00a4ef" /><path d="M12.500 14.500H17V19h-4.500z" fill="#ffb900" /></Svg></App24>
    <App24 w="w-[49px]"><svg width="32" height="28" viewBox="0 0 32 28"><path d="M2 8L14 1l12 7v14H2z" fill="#1267b4" /><path d="M4 8h20v6l-10 6L4 14z" fill="#fff" /><path d="M2 10l12 7 12-7v13H2z" fill="#35a0ea" /><rect x="4" y="13" width="27" height="14" rx="7" fill="#33383c" stroke="#999" /><text x="7" y="24" fontSize="11" fontWeight="700" fill="#fff" fontFamily="Noto Sans, sans-serif">99+</text></svg></App24>
    <App24 w="w-[29px]" on><Svg><circle cx="12" cy="12" r="11" fill="#e33b2e" /><path d="M12 12L2.500 6.500A11 11 0 0 0 11 23z" fill="#2ba24c" /><path d="M12 12l-1 11A11 11 0 0 0 22 7z" fill="#fbc116" /><circle cx="11" cy="11.500" r="5" fill="#4285f4" stroke="#fff" strokeWidth="1.500" /><circle cx="18" cy="17.500" r="6" fill="#ddd" /><circle cx="18" cy="15" r="2.200" fill="#7a4a30" /><path d="M13.500 21.500c1-4 8-4 9 0a6 6 0 0 1-9 0z" fill="#112" /></Svg></App24>
    <App24 w="w-[35px] ml-1" on active><Qgis s={24} /></App24>
    <App24 w="w-[43px]" on><Svg><ellipse cx="12" cy="8" rx="10" ry="6.500" transform="rotate(-25 12 8)" fill="#f2f2f2" stroke="#d03a3a" strokeWidth="1.600" /><path d="M6 15l11-5M16 8l-1 10" stroke="#aaa" strokeWidth="2" /><circle cx="14" cy="20.500" r="2.300" stroke="#2b7bc0" strokeWidth="2" /><circle cx="20.500" cy="16.500" r="2.300" stroke="#2b7bc0" strokeWidth="2" /><path d="M15 18l4-3" stroke="#2b7bc0" strokeWidth="2" /></Svg></App24>
    <App24 w="w-[34px]"><Svg><path d="M12 0l6 6-6 6-6-6z" fill="#ef7a67" /><path d="M6 6l6 6-6 6-6-6z" fill="#85b7f0" /><path d="M18 6l6 6-6 6-6-6z" fill="#8fd07c" /><path d="M12 12l6 6-6 6-6-6z" fill="#f7dc7c" /><path d="M8 4l4 4v9M12 8l5 4" stroke="#222" strokeWidth="1.500" /><circle cx="12" cy="8" r="1.700" fill="#222" /><circle cx="12" cy="17" r="1.700" fill="#222" /><circle cx="17" cy="12" r="1.700" fill="#222" /></Svg></App24>
    <App24 w="w-[40px]"><svg width="22" height="19" viewBox="0 0 22 19"><rect x=".5" y=".5" width="21" height="18" fill="#050505" stroke="#999" /><path d="M1 1h20v3H1z" fill="#ccc" /><text x="2.500" y="10" fontSize="6" fill="#fff" fontFamily="Liberation Mono, monospace">C:\_</text></svg></App24>
    <App24 w="w-[38px]" on><Svg><path d="M17 1L6.500 10.500 2.500 7.500.8 8.500v7l1.700 1 4-3L17 23l6-3V4zm0 6.500v9L11 12z" fill="#1f88d2" fillRule="evenodd" /><path d="M17 1l6 3v16l-6 3z" fill="#37a6f2" /></Svg></App24>
    <App24 w="w-[38px]"><Svg><circle cx="12" cy="12" r="10.800" fill="#232127" stroke="#ddd" strokeWidth="1.200" /><path d="M10 3.500c-3.500 1.500-4 7 0 8.500 2 .5 3 0 4-1M20 10c-2-3-7-3-8.300 1-.5 2 0 3 1.300 4M6 19c3.500 2 8-.5 7.500-5-.5-2-1.500-2.500-3-3" stroke="#ddd" strokeWidth="1.800" /></Svg></App24>
    <App24 w="w-[38px]"><Svg><circle cx="12" cy="12" r="11" fill="#7a3fae" /><path d="M7 18c1 1 2 0 3 0v3h4v-4c2 0 5-1 5-5 0-2-.5-3-1-4 .3-1 0-2-.3-2.500-1 0-2 .7-2.700 1.200h-6C8.300 6 7.300 5.500 6.300 5.500 6 6 5.700 7 6 8c-.7 1-1 2-1 4 0 4 3 5 5 5" fill="#fff" /></Svg></App24>
    <App24 w="w-[37px]" on><Svg><rect x="3" y="1" width="18" height="22" fill="#e9f3fb" stroke="#4b8cc4" strokeWidth="1.300" /><path d="M3 1h18v5H3z" fill="#5ba2dd" /><text x="5" y="15" fontSize="11" fontWeight="700" fill="#e07b28" fontFamily="Liberation Serif, serif">A</text><path d="M14 9h5M14 12h5M6 17.500h12M6 20h12" stroke="#4b8cc4" /></Svg></App24>
    <App24 w="w-[39px]" on><Svg><path d="M2 15c-2-6 4-10 11-9s9 5 7 9-5 1-6 3 0 5-4 5-7-4-8-8z" fill="#c9dff0" stroke="#6b90ad" /><circle cx="7" cy="11" r="1.800" fill="#d33" /><circle cx="6" cy="16" r="1.800" fill="#e9b820" /><circle cx="12" cy="9" r="1.800" fill="#393" /><circle cx="10" cy="19" r="1.800" fill="#36c" /><path d="M12 17l9-14" stroke="#b5722f" strokeWidth="2.500" /><path d="M19 4l2-4 3 2-3 4z" fill="#e3b37a" /></Svg></App24>
    <App24 w="w-[39px]" on><Svg><path d="M12 0c2 5 8 9 8 15a8 8 0 0 1-16 0C4 9 10 7 12 0z" fill="#d84a9c" /><path d="M12 0c1 2 1.500 3 3 5L7 10c1-3 4-5 5-10z" fill="#f5d22b" /><path d="M6.500 10l9-5 2 3L5 14c0-1 .5-3 1.500-4z" fill="#f07a3c" /><path d="M4 15.500c5 1 8-4 16-2 0 6.500-4 9.500-8 9.500s-8-2.500-8-7.500z" fill="#8a5ad8" /><path d="M4 16c4-2 8 5 14 3-2 3-4 4-6 4-4 0-8-2.500-8-7z" fill="#2fb4f7" /></Svg></App24>
    <div className="ml-[25px] flex shrink-0 items-center">
      <svg width="28" height="26" viewBox="0 0 28 26"><path d="M4 22a4.500 4.500 0 0 1 0-9 7 7 0 0 1 13-3 6 6 0 0 1 3 12z" fill="#a9c9f3" /><path d="M4 22a4 4 0 0 1 3-7c6-3 12 0 14 6z" fill="#dbe8fa" /><circle cx="19" cy="8" r="6.500" fill="#c42b1c" /><text x="16.800" y="12" fontSize="10" fill="#fff" fontFamily="Noto Sans, sans-serif">1</text></svg>
      <span className="ml-[4px] w-[53px] text-[13px] tracking-[-0.1px]">13°C</span>
      <svg width="150" height="20" viewBox="0 0 150 20" fill="none" stroke="#fff" strokeWidth="1.300">
        <path d="M2 13l6-6 6 6" />
        <rect x="28" y="6" width="8" height="8" rx="1" /><path d="M36 9l3-1.500v5L36 11M28 3.500q4-3 8 0M28 16.500q4 3 8 0" />
        <path d="M51 14a3 3 0 0 1 0-6 5 5 0 0 1 9-1 4 4 0 0 1 3 7z" fill="#e5e5e5" stroke="none" />
        <rect x="77" y="7" width="11" height="8" /><path d="M80.500 9.500h5v3h-5z" fill="#fff" /><path d="M89.500 9v4M74 3v3M77 3v3M73 6h5v3h-5zM75.500 9v6" />
        <path d="M98 16a12 12 0 0 1 11-11M101 16a9 9 0 0 1 8-8M104 16a6 6 0 0 1 5-5" /><circle cx="108" cy="15" r="1.200" fill="#fff" />
        <path d="M119 8h2.500l4-4v12l-4-4H119zM128 7q2 3 0 6M130.500 5q3 5 0 10" /><path d="M133 3q4 7 0 14" stroke="#888" />
      </svg>
    </div>
    <div className="-ml-[5px] flex w-[24px] shrink-0 items-center text-[12px] tracking-[-0.4px]">ENG</div>
    <div className="ml-[2px] flex w-[72px] shrink-0 flex-col items-center justify-center text-[12px] leading-[18px] tracking-[-0.25px]"><span>10:10 AM</span><span>10/3/2023</span></div>
    <div className="ml-[8px] flex items-center pt-1">
      <svg width="26" height="26" viewBox="0 0 26 26"><path d="M1 2h16v13H7l-3 3v-3H1z" fill="#fff" /><path d="M4 5.500h10M4 8.500h10M4 11.500h7" stroke="#222" /><circle cx="16" cy="16" r="8" fill="#33383c" stroke="#999" /><text x="13" y="20.500" fontSize="12" fill="#fff" fontFamily="Noto Sans, sans-serif">7</text></svg>
    </div>
  </div>
);

/* ---------- annotations ---------- */
const Box = ({ className }) => <div className={"absolute border-[5px] border-[#ed1b24] " + className} />;
const Num = ({ className, children }) => <div className={"absolute text-[31px] font-bold leading-[32px] text-[#0dd34a] " + className}>{children}</div>;

const Spin = ({ children, className }) => (
  <div className={"flex h-[22px] shrink-0 items-center rounded-[2px] border border-[#aaa] bg-white pl-[4px] tracking-[-0.2px] " + className}>
    <span className="flex-1">{children}</span>
    <div className="flex h-full w-[14px] flex-col items-center justify-center gap-1 border-l border-[#ccc] bg-[#f6f6f6]"><div className="rotate-180"><Down /></div><Down /></div>
  </div>
);

export default function App() {
  return (
    <div className="relative flex h-[768px] w-[1366px] flex-col overflow-hidden bg-[#f0f0f0] font-['Noto_Sans',sans-serif] text-[12px] text-black">
      <div className="flex h-[23px] shrink-0 items-center bg-white pl-[2px]">
        <Qgis /><span className="ml-1 flex-1 tracking-[-0.5px]">*select features_new — QGIS</span>
        <svg width="104" height="12" viewBox="0 0 104 12" fill="none" stroke="#111" className="mr-[18px] -mt-1"><path d="M1 6.500h10M46.500 3.500h7v7h-7zM48.500 3.500v-2h7v7h-2M92 1l10 10M102 1L92 11" /></svg>
      </div>
      <div className="flex h-[20px] shrink-0 items-center border-b border-[#d5d5d5] bg-[#efefef] pl-[10px] tracking-[-0.38px]">
        {MENU.map(([w, a, b, c]) => <span key={a + b + c} className={"shrink-0 " + w}>{a}<span className="underline underline-offset-2">{b}</span>{c}</span>)}
      </div>
      <Bar items={ROW1} /><Bar items={ROW2} /><Bar items={ROW3} /><Bar items={ROW4} h="h-[38px]" />

      <div className="flex h-[502px] shrink-0">
        <div className="flex w-[263px] shrink-0 flex-col">
          <PanelHead title="Browser" />
          <div className="flex h-[26px] shrink-0 items-center gap-[8.3px] pl-[7px]">
            <AddLayer /><Refresh s={17} /><Funnel /><TreeUp />
            <svg width="17" height="17" viewBox="0 0 17 17" fill="none"><circle cx="8" cy="8.500" r="6.500" fill="#5b8cc4" stroke="#4675aa" /><path d="M7 7.500h1.500l-1 4.500h1.500M9 4v1.500" stroke="#fff" strokeWidth="1.400" /></svg>
          </div>
          <div className="mt-[4px] flex h-[177px] shrink-0 flex-col border border-[#b4b4b4] bg-white">
            <div className="flex h-[162px] overflow-hidden">
              <div className="flex-1 overflow-hidden">
                {TREE.map(([Ic, t, tr], i) => (
                  <div key={i} className={"flex h-[18px] items-center whitespace-nowrap pl-[36px] " + (i === 4 ? "bg-[#efefef]" : "")}>
                    <Tri /><span className="ml-[7px]"><Ic /></span><span className={"ml-[6px] leading-[18px] " + tr}>{t}</span>
                  </div>
                ))}
              </div>
              <div className="flex w-[14px] shrink-0 flex-col border-l border-[#b8b8b8] bg-[#e3e3e3]">
                <div className="flex h-[14px] shrink-0 items-center justify-center border-b border-[#c0c0c0] bg-[#f6f6f6]"><Tri dir="u" /></div>
                <div className="mt-[61px] h-[28px] shrink-0 border-y border-[#c0c0c0] bg-[#f8f8f8]" />
                <div className="flex-1" />
                <div className="flex h-[14px] shrink-0 items-center justify-center border-t border-[#c0c0c0] bg-[#f6f6f6]"><Tri dir="d" /></div>
              </div>
            </div>
            <HScroll thumb="w-[66px]" corner />
          </div>
          <div className="flex h-[5px] shrink-0 items-center justify-center"><div className="h-px w-[17px] bg-[repeating-linear-gradient(90deg,#aaa_0_1px,transparent_1px_3px)]" /></div>
          <PanelHead title="Layers" />
          <div className="mb-[2px] flex h-[27px] shrink-0 items-center gap-[8.2px] pl-[7px]">
            <Svg s={17}><path d="M22 2l-8 8" stroke="#b07a2a" strokeWidth="3.500" /><path d="M11 7l7 6-3 3-8-5z" fill="#f0c53a" stroke="#a67f10" strokeWidth=".6" /><path d="M7 9l9 7-5 5L1 13z" fill="#e4574a" /><path d="M8 9l8 6-3 3-8-6z" fill="#5a95dd" /><path d="M4 11l8 6-2 2-8-6z" fill="#f5d25a" /></Svg>
            <Svg s={17}><path d="M2 9h10v12H2zM6 5h10v12M10 3h10v12" stroke="#666" strokeWidth="1.300" /><path d="M11 1v16" stroke="#3a6292" strokeWidth="2" /><rect x="14" y="14" width="9" height="9" rx="1.500" fill="#4b9b5b" /><path d="M18.500 15.500v6M15.500 18.500h6" stroke="#fff" strokeWidth="1.500" /></Svg>
            <Svg s={17}><path d="M1 12c5-9 16-9 21 0-5 8-16 8-21 0z" fill="#fff" stroke="#888" strokeWidth="1.500" /><circle cx="11.500" cy="11.500" r="4.500" fill="#5a86b8" /><circle cx="11.500" cy="11.500" r="2" fill="#111" /><path d="M16 20h8l-4 4z" fill="#555" /></Svg>
            <Funnel tri />
            <span className="flex items-center gap-[5px]"><Svg s={17}><text x="0" y="15" fontSize="22" fill="#6a3b7c" fontFamily="Noto Sans, sans-serif">ε</text><path d="M12 14h12l-4 4v6l-4-2v-4z" fill="#b5b5b5" stroke="#888" /></Svg><Down c="#555" /></span>
            <TreeUp down /><TreeUp /><AddLayer minus />
          </div>
          <div className="flex h-[217px] shrink-0 flex-col border border-[#b4b4b4] bg-white">
            <div className="flex-1 overflow-hidden pt-px">
              <Layer on color="bg-[#c43c39]" name="Nigeria_map" cls="font-bold tracking-[-0.6px]" />
              <Layer on color="bg-[#91522d]" name="Neigboring_14_countries" cls="font-bold underline tracking-[-0.42px]" row="bg-[#efefef]" />
              <Layer color="bg-[#e15989]" name="nga_admbnda_osgof_eha_itos.gdb/nga" cls="font-bold italic text-[#8a8a8a] tracking-[-0.1px]" />
              <Layer color="bg-[#987db7]" name="nga_admbnda_osgof_eha_itos.gdb/nga" cls="font-bold italic text-[#8a8a8a] tracking-[-0.1px]" />
            </div>
            <HScroll thumb="w-[80px]" />
          </div>
        </div>
        <div className="flex w-[6px] shrink-0 flex-col items-end pt-[243px]"><div className="mr-[2px] h-[17px] w-px bg-[repeating-linear-gradient(#aaa_0_1px,transparent_1px_3px)]" /></div>
        <div className="mt-px flex-1 overflow-hidden border border-[#b4b4b4] bg-white"><MapView /></div>
      </div>

      <div className="flex h-[28px] shrink-0 items-center pt-px tracking-[-0.5px] text-[11.5px]">
        <div className="ml-1 flex h-[22px] w-[200px] shrink-0 items-center rounded-[2px] border border-[#aaa] bg-white pl-2 pr-[7px] text-[12px]">
          <svg width="13" height="13" viewBox="0 0 13 13" fill="none" stroke="#888" strokeWidth="1.200"><circle cx="5" cy="5" r="4.300" /><path d="M8 8l4.500 4.500" /></svg>
          <span className="ml-[6px] flex-1 tracking-[-0.7px]">polygon</span>
          <svg width="13" height="10" viewBox="0 0 13 10"><path d="M4 0h9v10H4L0 5z" fill="#888" /><path d="M5.500 2.500l5 5M10.500 2.500l-5 5" stroke="#fff" strokeWidth="1.200" /></svg>
        </div>
        <span className="ml-[427px] w-[57px] shrink-0 tracking-[-0.65px]">Coordinate</span>
        <div className="flex h-[22px] w-[87px] shrink-0 items-center rounded-[2px] border border-[#aaa] bg-white pl-[6px] whitespace-nowrap tracking-[-0.1px] text-[11px]">24.38°, 27.16°</div>
        <Svg s={16} className="ml-[5px]"><path d="M3 5c0-4 5-5 6 0s-5 4-6 0zM9 8l6 9M14 7l8-5M15 11l7-3" stroke="#333" strokeWidth="2" /><path d="M5 9l7 12M13 18l8 4" stroke="#555" strokeWidth="3" /><circle cx="17" cy="17" r="4.500" stroke="#444" strokeWidth="2" fill="#aaa" /></Svg>
        <span className="ml-[12px] w-[30px] shrink-0">Scale</span>
        <div className="flex h-[22px] w-[27px] shrink-0 items-center border border-[#aaa] bg-white"><span className="w-[10px]">2</span><div className="flex h-full flex-1 items-center justify-center border-l border-[#ccc]"><Down /></div></div>
        <Svg s={14} className="ml-[13px]"><path d="M7 10V6a5 5 0 0 1 10 0v4" stroke="#555" strokeWidth="2.500" /><rect x="2" y="10" width="20" height="13" rx="2" fill="#555" /></Svg>
        <span className="ml-[7px] w-[48px] shrink-0 tracking-[-0.75px]">Magnifier</span>
        <Spin className="w-[84px]">100%</Spin>
        <span className="ml-[8px] w-[51px] shrink-0">Rotation</span>
        <Spin className="w-[84px]">0.0 °</Spin>
        <span className="ml-[6px]"><Check on /></span><span className="ml-[4px] w-[52px] shrink-0">Render</span>
        <Svg s={15}><circle cx="12" cy="12" r="10" stroke="#777" strokeWidth="2" /><path d="M2 12h20M5 6h14M5 18h14M12 2v20M12 2c-6 6-6 14 0 20M12 2c6 6 6 14 0 20" stroke="#777" strokeWidth="1.600" /></Svg>
        <span className="w-[77px] shrink-0 pl-px tracking-[-0.35px]">EPSG:4326</span>
        <Svg s={17}><path d="M3 2h18q2 0 2 2v9q0 2-2 2h-3l1 6-6-6H3q-2 0-2-2V4q0-2 2-2z" fill="#666" /><path d="M6 8h2M11 8h2M16 8h2" stroke="#fff" strokeWidth="2" /></Svg>
      </div>
      <Taskbar />

      <Dialog />

      <Box className="left-[902px] top-[29px] h-[51px] w-[63px]" />
      <div className="absolute left-[906px] top-[78px] flex h-[46px] w-[214px] flex-col border border-[#999] bg-white text-[12px] tracking-[-0.32px] shadow-[3px_3px_3px_rgba(0,0,0,0.4)]">
        <div className="flex h-[22px] items-center pl-[7px]"><div className="h-[10px] w-[15px] border border-[#e9d060] bg-[#fbe74e]" /><span className="ml-[5px]">Select by Location</span></div>
        <div className="flex h-[22px] items-center bg-[#0078d7] pl-[7px] pt-[2px] text-white"><div className="h-[14px] w-[14px] border-[3px] border-[#f4d72f] bg-[#7f9e7c]" /><span className="ml-[6px]">Select Within Distance</span></div>
      </div>
      <Box className="left-[923px] top-[77px] h-[29px] w-[180px]" />
      <Box className="left-[840px] top-[228px] h-[52px] w-[282px]" />
      <Box className="left-[844px] top-[296px] h-[106px] w-[186px]" />
      <Box className="left-[840px] top-[397px] h-[56px] w-[203px]" />
      <div className="absolute left-[1073px] top-[650px] whitespace-nowrap text-[19px] leading-[24px] text-[#a0a0a0]/70">Activate Windows</div>
      <div className="absolute left-[1073px] top-[676px] whitespace-nowrap text-[14px] leading-[18px] tracking-[0.13px] text-[#a0a0a0]/70">Go to Settings to activate Windows.</div>
      <Box className="left-[1153px] top-[670px] h-[37px] w-[92px]" />
      <Num className="left-[919px] top-[3px]">1</Num>
      <Num className="left-[890px] top-[70px]">2</Num>
      <Num className="left-[806px] top-[226px]">3</Num>
      <Num className="left-[803px] top-[311px]">4</Num>
      <Num className="left-[792px] top-[410px]">5</Num>
      <Num className="left-[1181px] top-[627px]">6</Num>
    </div>
  );
}
